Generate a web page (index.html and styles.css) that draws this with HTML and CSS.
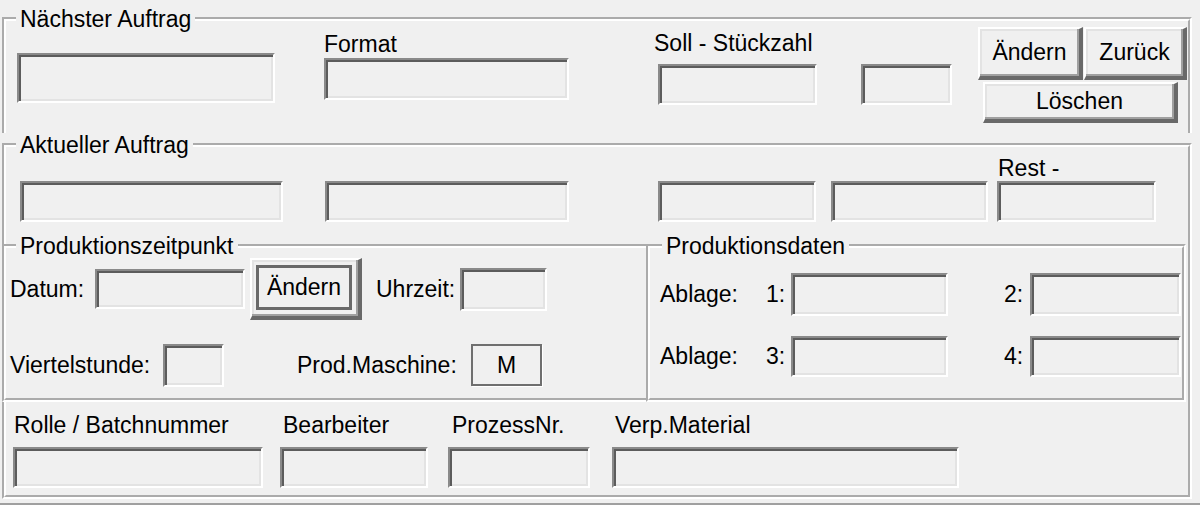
FILE: index.html
```html
<!DOCTYPE html>
<html lang="de">
  <head>
    <meta charset="UTF-8" />
    <meta name="viewport" content="width=device-width, initial-scale=1.0" />
    <title>Auftrag</title>
    <link rel="stylesheet" href="styles.css">
  </head>
  <body>
    <div class="dialog">
      <fieldset class="group group-next">
        <legend>Nächster Auftrag</legend>
        <div class="row">
          <input class="edit next-order" readonly />
          <div class="col next-format">
            <label>Format</label>
            <input class="edit" readonly />
          </div>
          <div class="col next-soll">
            <label>Soll - Stückzahl</label>
            <input class="edit" readonly />
          </div>
          <input class="edit next-extra" readonly />
          <div class="actions">
            <div class="actions-top">
              <button class="btn btn-change">Ändern</button>
              <button class="btn btn-back">Zurück</button>
            </div>
            <button class="btn btn-delete">Löschen</button>
          </div>
        </div>
      </fieldset>

      <fieldset class="group group-current">
        <legend>Aktueller Auftrag</legend>
        <div class="row">
          <input class="edit cur-order" readonly />
          <input class="edit cur-format" readonly />
          <input class="edit cur-soll" readonly />
          <input class="edit cur-ist" readonly />
          <div class="col cur-rest">
            <label>Rest -</label>
            <input class="edit" readonly />
          </div>
        </div>
      </fieldset>

      <div class="split">
        <fieldset class="group group-time">
          <legend>Produktionszeitpunkt</legend>
          <div class="line line-date">
            <span class="lbl lbl-datum">Datum:</span>
            <input class="edit date" readonly />
            <button class="btn btn-default"><span>Ändern</span></button>
            <span class="lbl lbl-uhrzeit">Uhrzeit:</span>
            <input class="edit time" readonly />
          </div>
          <div class="line line-quarter">
            <span class="lbl lbl-viertel">Viertelstunde:</span>
            <input class="edit quarter" readonly />
            <span class="lbl lbl-maschine">Prod.Maschine:</span>
            <div class="static">M</div>
          </div>
        </fieldset>

        <fieldset class="group group-data">
          <legend>Produktionsdaten</legend>
          <div class="line line-stack1">
            <span class="lbl lbl-ablage">Ablage:</span>
            <span class="lbl lbl-num">1:</span>
            <input class="edit stack-left" readonly />
            <span class="lbl lbl-num lbl-num-right">2:</span>
            <input class="edit stack-right" readonly />
          </div>
          <div class="line line-stack2">
            <span class="lbl lbl-ablage">Ablage:</span>
            <span class="lbl lbl-num">3:</span>
            <input class="edit stack-left" readonly />
            <span class="lbl lbl-num lbl-num-right">4:</span>
            <input class="edit stack-right" readonly />
          </div>
        </fieldset>
      </div>

      <div class="panel">
        <div class="col batch">
          <label>Rolle / Batchnummer</label>
          <input class="edit" readonly />
        </div>
        <div class="col editor">
          <label>Bearbeiter</label>
          <input class="edit" readonly />
        </div>
        <div class="col process">
          <label>ProzessNr.</label>
          <input class="edit" readonly />
        </div>
        <div class="col packing">
          <label>Verp.Material</label>
          <input class="edit" readonly />
        </div>
      </div>
    </div>
    <div class="footer"></div>
  </body>
</html>
```

FILE: styles.css
```css
* {
  box-sizing: border-box;
}
body {
  margin: 0;
  background-color: #f0f0f0;
  font-family: "Liberation Sans", Arial, sans-serif;
  font-size: 23px;
  color: #000;
}
.dialog {
  width: 1192px;
  padding: 7px 0 0 2px;
}

/* group boxes */
.group {
  margin: 0;
  padding: 0;
  border: 4px groove #fff;
  min-width: 0;
}
.group legend {
  margin-left: 10px;
  padding: 0 4px;
  line-height: 24px;
}
.group-next {
  border-bottom: none;
  padding-bottom: 10px;
}
.group-current {
  border-bottom: none;
  padding-bottom: 23px;
}

.row {
  display: flex;
  align-items: flex-start;
}
.col {
  display: flex;
  flex-direction: column;
  align-items: flex-start;
}
.col label {
  display: block;
  line-height: 22px;
  white-space: nowrap;
}

/* sunken edit boxes */
.edit {
  display: block;
  margin: 0;
  padding: 0;
  font: inherit;
  background-color: #f0f0f0;
  border-style: solid;
  border-width: 2px;
  border-color: #8a8a8a #fff #fff #8a8a8a;
  box-shadow: inset 2px 2px #5c5c5c, inset -2px -2px #e3e3e3;
  outline: none;
}

/* raised buttons */
.btn {
  margin: 0;
  padding: 0;
  font: inherit;
  color: #000;
  background-color: #f0f0f0;
  border-style: solid;
  border-width: 2px 4px 4px 2px;
  border-color: #fff #696969 #696969 #fff;
  box-shadow: inset -2px -2px #a0a0a0, inset 2px 2px #e3e3e3;
}

/* Nächster Auftrag */
.next-order {
  width: 258px;
  height: 50px;
  margin: 22px 0 0 11px;
}
.next-format {
  margin-left: 49px;
}
.next-format label {
  margin-top: 2px;
}
.next-format .edit {
  width: 245px;
  height: 42px;
  margin-top: 3px;
}
.next-soll {
  margin-left: 89px;
}
.next-soll label {
  margin: 1px 0 0 -4px;
}
.next-soll .edit {
  width: 159px;
  height: 41px;
  margin-top: 10px;
}
.next-extra {
  width: 91px;
  height: 41px;
  margin: 33px 0 0 44px;
}
.actions {
  margin: -4px 0 0 26px;
}
.actions-top {
  display: flex;
}
.btn-change {
  width: 105px;
  height: 53px;
}
.btn-back {
  width: 103px;
  height: 53px;
  margin-left: 1px;
}
.btn-delete {
  display: block;
  width: 195px;
  height: 41px;
  margin: 2px 0 0 5px;
}

/* Aktueller Auftrag */
.cur-order,
.cur-format,
.cur-soll,
.cur-ist,
.cur-rest .edit {
  height: 41px;
  margin-top: 24px;
}
.cur-order {
  width: 263px;
  margin-left: 14px;
}
.cur-format {
  width: 244px;
  margin-left: 42px;
}
.cur-soll {
  width: 158px;
  margin-left: 89px;
}
.cur-ist {
  width: 157px;
  margin-left: 15px;
}
.cur-rest {
  margin-left: 9px;
}
.cur-rest label {
  margin-left: 1px;
}
.cur-rest .edit {
  width: 159px;
  margin-top: 2px;
}

/* Produktionszeitpunkt / Produktionsdaten */
.split {
  display: flex;
  margin-top: -11px;
  padding-right: 2px;
  border-right: 4px groove #fff;
}
.group-time {
  width: 644px;
  border-right: none;
  padding-bottom: 10px;
}
.group-data {
  flex: 1;
}
.group-data legend {
  margin-left: 12px;
}
.line {
  display: flex;
  align-items: center;
}
.lbl {
  flex: none;
  white-space: nowrap;
}
.line-date {
  height: 62px;
}
.line-quarter {
  height: 46px;
  margin-top: 22px;
}
.lbl-datum {
  width: 85px;
  margin-left: 4px;
}
.date {
  width: 150px;
  height: 40px;
}
.btn-default {
  display: flex;
  width: 112px;
  height: 62px;
  margin-left: 5px;
  padding: 5px 6px 6px 4px;
}
.btn-default span {
  flex: 1;
  display: flex;
  align-items: center;
  justify-content: center;
  border: 3px solid #696969;
}
.lbl-uhrzeit {
  width: 84px;
  margin-left: 14px;
}
.time {
  width: 87px;
  height: 43px;
}
.lbl-viertel {
  width: 153px;
  margin-left: 4px;
}
.quarter {
  width: 61px;
  height: 43px;
}
.lbl-maschine {
  width: 174px;
  margin-left: 73px;
}
.static {
  display: flex;
  align-items: center;
  justify-content: center;
  width: 71px;
  height: 42px;
  border: 2px solid #6f6f6f;
  box-shadow: 1px 1px 0 #fff;
}

.line-stack1 {
  height: 43px;
  margin-top: 15px;
}
.line-stack2 {
  height: 41px;
  margin-top: 20px;
}
.lbl-ablage {
  width: 106px;
  margin-left: 10px;
}
.lbl-num {
  width: 25px;
}
.lbl-num-right {
  width: 26px;
  margin-left: 56px;
}
.stack-left {
  width: 157px;
  height: 100%;
}
.stack-right {
  width: 151px;
  height: 100%;
}

/* bottom panel */
.panel {
  display: flex;
  padding: 12px 0 7px 0;
  border: 4px groove #fff;
  border-top: none;
}
.panel .edit {
  height: 41px;
  margin-top: 11px;
}
.batch {
  margin-left: 7px;
}
.batch .edit {
  width: 250px;
}
.batch label {
  padding-left: 1px;
}
.editor {
  margin-left: 17px;
}
.editor .edit {
  width: 148px;
}
.editor label {
  padding-left: 3px;
}
.process {
  margin-left: 20px;
}
.process .edit {
  width: 142px;
}
.process label {
  padding-left: 4px;
}
.packing {
  margin-left: 22px;
}
.packing .edit {
  width: 347px;
}
.packing label {
  padding-left: 3px;
}

.footer {
  margin-top: 4px;
  height: 9px;
  border-top: 2px solid #a0a0a0;
  background-color: #fff;
}
```
